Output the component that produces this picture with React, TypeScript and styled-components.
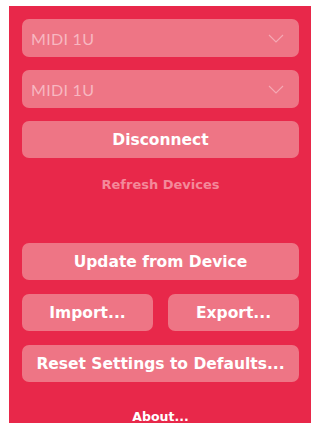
import React from "react";
import styled, { createGlobalStyle } from "styled-components";

const Global = createGlobalStyle`
  html, body { margin: 0; padding: 0; background: #ffffff; }
  body { font-family: "DejaVu Sans", "Open Sans", sans-serif; }
`;

const Page = styled.div`
  padding: 6px 0 0 9px;
`;

const Panel = styled.div`
  width: 302px;
  height: 417px;
  box-sizing: border-box;
  background: #e8284a;
  padding: 13px 12px 0 13px;
  display: flex;
  flex-direction: column;
`;

const Select = styled.div<{ $mt?: number }>`
  height: 38px;
  flex-shrink: 0;
  margin-top: ${(p) => p.$mt ?? 0}px;
  border-radius: 7px;
  background: #ee7585;
  display: flex;
  align-items: center;
  justify-content: space-between;
  padding: 0 15px 0 9px;
  color: #f7b8c1;
  font-family: "Lato", "Open Sans", sans-serif;
  font-size: 16px;
  letter-spacing: 0.3px;
`;

const Button = styled.div<{ $mt?: number; $flex?: boolean }>`
  height: 37px;
  flex-shrink: 0;
  margin-top: ${(p) => p.$mt ?? 0}px;
  border-radius: 7px;
  background: #ee7585;
  display: flex;
  align-items: center;
  justify-content: center;
  color: #ffffff;
  font-weight: 700;
  font-size: 15.5px;
  ${(p) => (p.$flex ? "flex: 1;" : "")}
`;

const Row = styled.div<{ $mt?: number }>`
  display: flex;
  gap: 15px;
  margin-top: ${(p) => p.$mt ?? 0}px;
`;

const LinkText = styled.div<{ $mt?: number; $color: string; $size: number }>`
  margin-top: ${(p) => p.$mt ?? 0}px;
  text-align: center;
  font-weight: 700;
  font-size: ${(p) => p.$size}px;
  color: ${(p) => p.$color};
  line-height: 18px;
  height: 18px;
  flex-shrink: 0;
`;

const Chevron = () => (
  <svg width="16" height="9" viewBox="0 0 16 9" fill="none">
    <path d="M1 1 L8 8 L15 1" stroke="#f5a9b4" strokeWidth="1.1" />
  </svg>
);

export default function App() {
  return (
    <>
      <Global />
      <Page>
        <Panel>
          <Select>
            <span>MIDI 1U</span>
            <Chevron />
          </Select>
          <Select $mt={13}>
            <span>MIDI 1U</span>
            <Chevron />
          </Select>
          <Button $mt={13}>Disconnect</Button>
          <LinkText $mt={18} $color="#f4899a" $size={13}>
            Refresh Devices
          </LinkText>
          <Button $mt={49}>Update from Device</Button>
          <Row $mt={14}>
            <Button $flex>Import...</Button>
            <Button $flex>Export...</Button>
          </Row>
          <Button $mt={14}>Reset Settings to Defaults...</Button>
          <LinkText $mt={26} $color="#ffffff" $size={12.5}>
            About...
          </LinkText>
        </Panel>
      </Page>
    </>
  );
}
